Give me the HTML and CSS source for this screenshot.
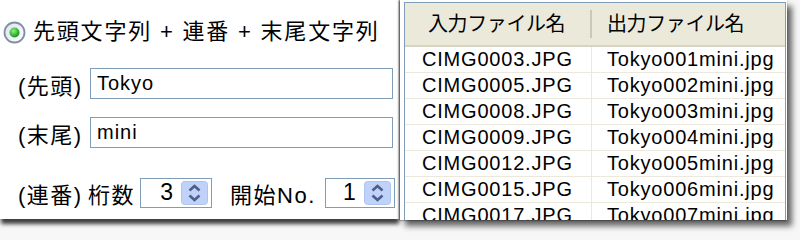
FILE: index.html
```html
<!DOCTYPE html>
<html lang="ja">
<head>
    <meta charset="UTF-8">
    <title>ファイル名の一括変更</title>
    <link rel="stylesheet" href="styles.css">
</head>
<body>
    <div class="stage">
        <div class="options">
            <div class="radio-row">
                <svg class="radio" width="23" height="23" viewBox="0 0 23 23">
                    <defs>
                        <radialGradient id="dot" cx="40%" cy="35%" r="65%">
                            <stop offset="0" stop-color="#8ef08e"/>
                            <stop offset="1" stop-color="#159415"/>
                        </radialGradient>
                        <linearGradient id="ring" x1="0" y1="0" x2="1" y2="1">
                            <stop offset="0" stop-color="#dde2e8"/>
                            <stop offset="1" stop-color="#ffffff"/>
                        </linearGradient>
                    </defs>
                    <circle cx="11.5" cy="11.5" r="10" fill="url(#ring)" stroke="#7d90a6" stroke-width="1.8"/>
                    <circle cx="11.5" cy="11.5" r="5" fill="url(#dot)"/>
                </svg>
                <span class="title">先頭文字列 + 連番 + 末尾文字列</span>
            </div>

            <div class="field-row">
                <span class="label">(先頭)</span>
                <div class="text-box">Tokyo</div>
            </div>

            <div class="field-row">
                <span class="label">(末尾)</span>
                <div class="text-box">mini</div>
            </div>

            <div class="field-row counter-row">
                <span class="label">(連番)</span>
                <span class="label digits-label">桁数</span>
                <div class="spin-box digits">
                    <span class="spin-value">3</span>
                    <svg class="spin-btn" width="27" height="24" viewBox="0 0 27 24">
                        <rect x="0.5" y="0.5" width="26" height="23" rx="3" fill="#c0d2fa" stroke="#aec4f0"/>
                        <path d="M8.5 9.5 L13.5 5 L18.5 9.5" fill="none" stroke="#4b5f8a" stroke-width="2.6"/>
                        <path d="M8.5 14.5 L13.5 19 L18.5 14.5" fill="none" stroke="#4b5f8a" stroke-width="2.6"/>
                    </svg>
                </div>
                <span class="label start-label">開始No.</span>
                <div class="spin-box start">
                    <span class="spin-value">1</span>
                    <svg class="spin-btn" width="27" height="24" viewBox="0 0 27 24">
                        <rect x="0.5" y="0.5" width="26" height="23" rx="3" fill="#c0d2fa" stroke="#aec4f0"/>
                        <path d="M8.5 9.5 L13.5 5 L18.5 9.5" fill="none" stroke="#4b5f8a" stroke-width="2.6"/>
                        <path d="M8.5 14.5 L13.5 19 L18.5 14.5" fill="none" stroke="#4b5f8a" stroke-width="2.6"/>
                    </svg>
                </div>
            </div>
        </div>

        <div class="preview">
            <div class="list">
                <div class="list-head">
                    <div class="col-in">入力ファイル名</div>
                    <div class="col-out">出力ファイル名</div>
                </div>
                <div class="list-row"><div class="col-in">CIMG0003.JPG</div><div class="col-out">Tokyo001mini.jpg</div></div>
                <div class="list-row"><div class="col-in">CIMG0005.JPG</div><div class="col-out">Tokyo002mini.jpg</div></div>
                <div class="list-row"><div class="col-in">CIMG0008.JPG</div><div class="col-out">Tokyo003mini.jpg</div></div>
                <div class="list-row"><div class="col-in">CIMG0009.JPG</div><div class="col-out">Tokyo004mini.jpg</div></div>
                <div class="list-row"><div class="col-in">CIMG0012.JPG</div><div class="col-out">Tokyo005mini.jpg</div></div>
                <div class="list-row"><div class="col-in">CIMG0015.JPG</div><div class="col-out">Tokyo006mini.jpg</div></div>
                <div class="list-row"><div class="col-in">CIMG0017.JPG</div><div class="col-out">Tokyo007mini.jpg</div></div>
            </div>
        </div>
    </div>
</body>
</html>
```

FILE: styles.css
```css
body {
    margin: 0;
    width: 800px;
    height: 240px;
    overflow: hidden;
    background: #f7f7f7;
    font-family: 'Liberation Sans', 'Noto Sans CJK JP', sans-serif;
    color: #000;
}

.stage {
    display: flex;
    align-items: flex-start;
}

/* left panel: naming options */
.options {
    width: 400px;
    height: 219px;
    box-sizing: border-box;
    padding: 21px 0 0 3px;
    background: #fff;
    box-shadow: 0 6px 4px -1px rgba(0, 0, 0, 0.75);
    font-size: 22px;
    letter-spacing: 1.5px;
}

.radio-row {
    display: flex;
    align-items: center;
    height: 22px;
}

.radio {
    flex: none;
}

.title {
    margin-left: 7px;
    line-height: 22px;
    letter-spacing: 1.8px;
}

.field-row {
    display: flex;
    align-items: center;
    padding-left: 15px;
    height: 31px;
    margin-top: 18px;
}

.field-row:nth-child(2) {
    margin-top: 25px;
}

.counter-row {
    margin-top: 29px;
}

.label {
    width: 64px;
    white-space: nowrap;
}

.text-box {
    margin-left: 8px;
    width: 303px;
    height: 31px;
    box-sizing: border-box;
    border: 1px solid #7f9db9;
    padding-left: 6px;
    font-size: 20px;
    letter-spacing: 1px;
    line-height: 29px;
}

.digits-label {
    width: auto;
    margin-left: 6px;
}

.start-label {
    width: auto;
    margin-left: 18px;
}

.spin-box {
    display: flex;
    align-items: center;
    justify-content: flex-end;
    height: 30px;
    box-sizing: border-box;
    border: 1px solid #7f9db9;
    padding-right: 3px;
    background: #fff;
}

.spin-box.digits {
    width: 72px;
    margin-left: 5px;
}

.spin-box.start {
    width: 70px;
    margin-left: 9px;
}

.spin-value {
    margin-right: 8px;
    font-size: 23px;
    letter-spacing: 0;
}

.spin-btn {
    display: block;
}

/* right panel: file list preview */
.preview {
    width: 387px;
    height: 220px;
    box-sizing: border-box;
    padding: 2px 1px 0 4px;
    background: #fff;
    overflow: hidden;
    box-shadow: -1px 0 2px rgba(0, 0, 0, 0.85), 5px 6px 6px rgba(0, 0, 0, 0.6);
}

.list {
    height: 100%;
    border: 1px solid #7f9db9;
    border-bottom: none;
    font-size: 20px;
    letter-spacing: 0.8px;
}

.list-head,
.list-row {
    display: flex;
}

.list-head {
    height: 44px;
    box-sizing: border-box;
    align-items: center;
    background: #ebe9da;
    border-bottom: 2px solid #d8d4c4;
    letter-spacing: -0.4px;
}

.list-head .col-in {
    padding-left: 23px;
    border-right: 2px solid #cbc8b6;
    height: 28px;
    line-height: 28px;
}

.list-head .col-out {
    line-height: 28px;
}

.col-in {
    width: 187px;
    box-sizing: border-box;
    padding-left: 17px;
    flex: none;
}

.col-out {
    padding-left: 15px;
}

.list-row {
    height: 26px;
    box-sizing: border-box;
    border-bottom: 1px solid #ece9dc;
    line-height: 25px;
}

.list-row .col-in {
    border-right: 1px solid #ece9dc;
}
```
